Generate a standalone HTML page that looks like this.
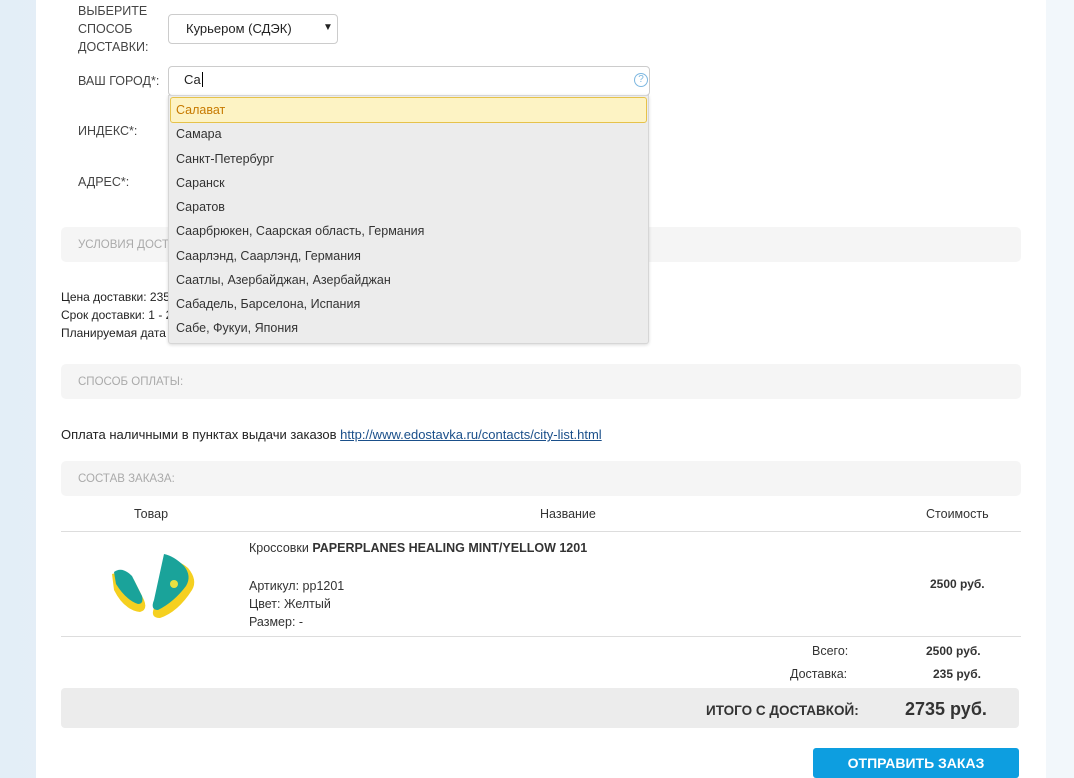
<!DOCTYPE html>
<html><head><meta charset="utf-8"><style>
body{margin:0;width:1074px;height:778px;overflow:hidden;background:linear-gradient(90deg,#e3eef7,#f2f7fb);font-family:"Liberation Sans",sans-serif;color:#333;position:relative}
.page{position:absolute;left:36px;top:0;width:1010px;height:778px;background:#fff}
.a{position:absolute;white-space:nowrap}
.lbl{font-size:12.5px;color:#444;line-height:18px}
.bar{position:absolute;left:61px;width:960px;height:35px;background:#f5f5f5;border-radius:5px}
.bar span{position:absolute;left:17px;top:12px;font-size:11.5px;color:#aaa}
.sm{font-size:12px;color:#222;line-height:18px}
.dd{position:absolute;left:168px;top:95px;width:479px;height:247px;background:#ececec;border:1px solid #d6d6d6;border-radius:0 0 3px 3px;box-shadow:0 1px 3px rgba(0,0,0,.15)}
.dd div{position:absolute;left:7px;font-size:12.5px;color:#333}
</style></head><body>
<div class="page"></div>
<div class="a lbl" style="left:78px;top:2px">ВЫБЕРИТЕ<br>СПОСОБ<br>ДОСТАВКИ:</div>
<div class="a" style="left:168px;top:14px;width:168px;height:28px;border:1px solid #ccc;border-radius:4px;background:#fff"></div>
<div class="a" style="left:186px;top:21px;font-size:13px;color:#222">Курьером (СДЭК)</div>
<div class="a" style="left:323px;top:22px;font-size:10px;color:#222">▼</div>
<div class="a lbl" style="left:78px;top:72px">ВАШ ГОРОД*:</div>
<div class="a" style="left:168px;top:66px;width:480px;height:28px;border:1px solid #ccc;border-radius:4px;background:#fff"></div>
<div class="a" style="left:184px;top:72px;font-size:13px;color:#222">Са<span style="border-left:1px solid #000;margin-left:1px"></span></div>
<div class="a" style="left:634px;top:73px;width:12px;height:12px;border:1px solid #7db7e0;border-radius:50%;font-size:10px;line-height:12px;text-align:center;color:#7db7e0">?</div>
<div class="a lbl" style="left:78px;top:122px">ИНДЕКС*:</div>
<div class="a lbl" style="left:78px;top:173px">АДРЕС*:</div>
<div class="bar" style="top:227px"><span>УСЛОВИЯ ДОСТАВКИ:</span></div>
<div class="a sm" style="left:61px;top:288px">Цена доставки: 235 руб.<br>Срок доставки: 1 - 2 дн.<br>Планируемая дата доставки</div>
<div class="dd">
<div style="left:1px;top:1px;width:475px;height:24px;background:#fdf3c4;border:1px solid #e6c24a;border-radius:3px"></div>
<div style="top:7px;color:#c77a00">Салават</div>
<div style="top:31px">Самара</div>
<div style="top:56px">Санкт-Петербург</div>
<div style="top:80px">Саранск</div>
<div style="top:104px">Саратов</div>
<div style="top:128px">Саарбрюкен, Саарская область, Германия</div>
<div style="top:153px">Саарлэнд, Саарлэнд, Германия</div>
<div style="top:177px">Саатлы, Азербайджан, Азербайджан</div>
<div style="top:201px">Сабадель, Барселона, Испания</div>
<div style="top:225px">Сабе, Фукуи, Япония</div>
</div>
<div class="bar" style="top:364px"><span>СПОСОБ ОПЛАТЫ:</span></div>
<div class="a" style="left:61px;top:427px;font-size:13px;color:#222">Оплата наличными в пунктах выдачи заказов <span style="color:#1a4f8a;text-decoration:underline">http://www.edostavka.ru/contacts/city-list.html</span></div>
<div class="bar" style="top:461px"><span>СОСТАВ ЗАКАЗА:</span></div>
<div class="a" style="left:134px;top:507px;font-size:12.5px">Товар</div>
<div class="a" style="left:540px;top:507px;font-size:12.5px">Название</div>
<div class="a" style="left:926px;top:507px;font-size:12.5px">Стоимость</div>
<div class="a" style="left:61px;top:531px;width:960px;border-top:1px solid #ddd"></div>
<svg class="a" style="left:104px;top:540px" width="96" height="80" viewBox="0 0 96 80">
<path d="M8 34 Q20 30 30 40 L40 60 Q44 70 36 72 Q20 70 10 50 Z" fill="#f5d020"/>
<path d="M10 32 Q18 26 28 36 L38 56 Q40 64 34 64 Q22 60 12 44 Z" fill="#1aa39a"/>
<path d="M60 20 Q72 18 84 28 Q94 40 88 50 Q74 72 56 78 Q46 78 50 68 Z" fill="#f5d020"/>
<path d="M60 14 Q70 16 80 26 Q88 36 82 46 Q70 62 54 70 Q46 70 50 60 Z" fill="#1aa39a"/>
<circle cx="70" cy="44" r="4" fill="#e8e040"/>
</svg>
<div class="a" style="left:249px;top:541px;font-size:12.5px">Кроссовки <b>PAPERPLANES HEALING MINT/YELLOW 1201</b></div>
<div class="a" style="left:249px;top:577px;font-size:12.5px;line-height:18px">Артикул: pp1201<br>Цвет: Желтый<br>Размер: -</div>
<div class="a" style="left:930px;top:577px;font-size:12px;font-weight:bold">2500 руб.</div>
<div class="a" style="left:61px;top:636px;width:960px;border-top:1px solid #ddd"></div>
<div class="a" style="left:812px;top:644px;font-size:12.5px">Всего:</div>
<div class="a" style="left:926px;top:644px;font-size:12px;font-weight:bold">2500 руб.</div>
<div class="a" style="left:790px;top:667px;font-size:12.5px">Доставка:</div>
<div class="a" style="left:933px;top:667px;font-size:12px;font-weight:bold">235 руб.</div>
<div class="a" style="left:61px;top:688px;width:958px;height:40px;background:#ececec;border-radius:4px"></div>
<div class="a" style="left:706px;top:703px;font-size:13.5px;font-weight:bold">ИТОГО С ДОСТАВКОЙ:</div>
<div class="a" style="left:905px;top:699px;font-size:18px;font-weight:bold">2735 руб.</div>
<div class="a" style="left:813px;top:748px;width:206px;height:30px;background:#0d9ee0;border-radius:3px;color:#fff;font-weight:bold;font-size:14px;text-align:center;line-height:30px">ОТПРАВИТЬ ЗАКАЗ</div>
</body></html>
